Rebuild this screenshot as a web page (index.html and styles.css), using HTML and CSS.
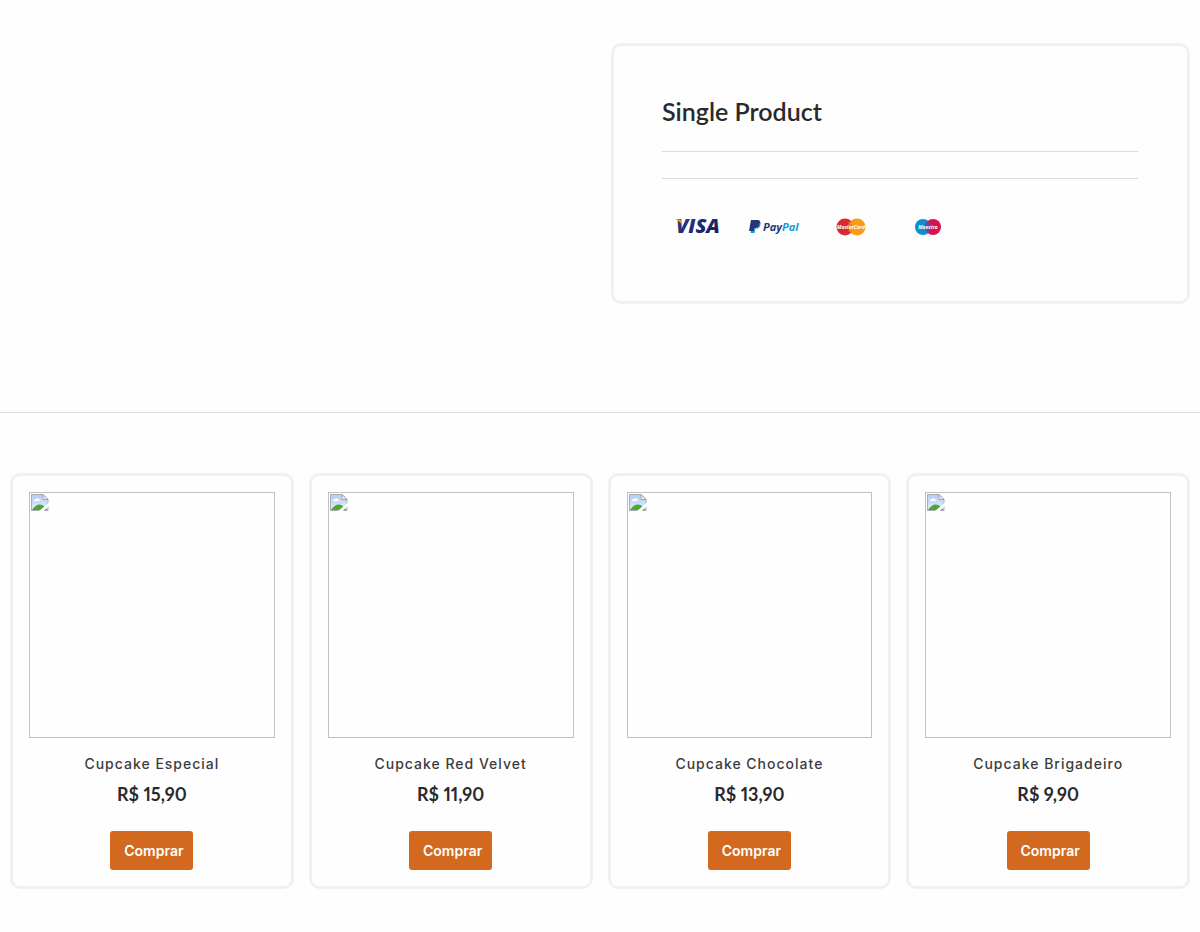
FILE: index.html
```html
<!DOCTYPE html>
<html lang="pt-BR">
<head>
<meta charset="utf-8">
<meta name="viewport" content="width=device-width, initial-scale=1">
<title>Single Product</title>
<link rel="stylesheet" href="styles.css">
</head>
<body>
<svg class="defs" aria-hidden="true">
  <defs>
    <linearGradient id="sky" x1="0" y1="0" x2="0" y2="1"><stop offset="0" stop-color="#b4cdf5"/><stop offset="1" stop-color="#e3edfc"/></linearGradient>
    <linearGradient id="visa" x1="0" y1="0" x2="1" y2="1"><stop offset="0" stop-color="#29419a"/><stop offset="1" stop-color="#13164f"/></linearGradient>
    <symbol id="missing" viewBox="0 0 18 18">
      <path d="M.5 .5H12L17 5.500V16.500H.5Z" fill="url(#sky)" stroke="#a9adb3"/>
      <path d="M3 6.500C3 5 4.500 5 5 5.500C5.500 3.500 8 4 8 5.500C9.500 5.500 9.500 7 8.500 7H3.500Z" fill="#fff"/>
      <path d="M1 16C3 12.500 6 10.500 9 10.500C12 10.500 14.500 13 16.500 16Z" fill="#4ea633"/>
      <path d="M12 .5V5.500H17Z" fill="#eef0f2" stroke="#a0a4aa"/>
      <path d="M7.500 17.500L18 8.500V12L12 17.500Z" fill="#fff"/>
    </symbol>
  </defs>
</svg>
<section class="detail">
  <article class="summary">
    <h1 class="summary-title">Single Product</h1>
    <hr class="rule">
    <hr class="rule rule-second">
    <div class="payments">
      <svg class="pay" viewBox="0 0 78 40" role="img" aria-label="Visa">
        <text class="visa" x="14" y="27" fill="url(#visa)">VISA</text>
        <path d="M12 13.500H18.500L20 19C18 15.500 16 14.500 12 13.500Z" fill="#f5a623"/>
      </svg>
      <svg class="pay" viewBox="0 0 78 40" role="img" aria-label="PayPal">
        <path d="M11 14H17C20 14 21 16 20 19C19 22 17 22 14.500 22L14 25H9Z" fill="#263577"/>
        <path d="M19.500 16.500C21 18 20.500 22 17 22.500H15.500L14.500 27H10.500L11 25H14L14.500 22C17 22 19 21.500 19.500 16.500Z" fill="#179bd7"/>
        <text class="paypal" x="23" y="25" fill="#263577">Pay<tspan fill="#179bd7">Pal</tspan></text>
      </svg>
      <svg class="pay" viewBox="0 0 78 40" role="img" aria-label="MasterCard">
        <circle cx="27" cy="21" r="8.500" fill="#d52b32"/><circle cx="39" cy="21" r="8.500" fill="#f99b16"/>
        <path d="M30 16.500H34M30 19H34M30 25H34" stroke="#ed6a28" stroke-width="1"/>
        <text class="brand" x="33" y="23">MasterCard</text>
      </svg>
      <svg class="pay" viewBox="0 0 78 40" role="img" aria-label="Maestro">
        <circle cx="27" cy="21" r="8" fill="#0c8fcf"/><circle cx="37" cy="21" r="8" fill="#d9124f"/>
        <path d="M32 14.800A8 8 0 0 1 32 27.200A8 8 0 0 1 32 14.800Z" fill="#70459a"/>
        <text class="brand" x="32" y="23">Maestro</text>
      </svg>
    </div>
  </article>
</section>
<section class="products">
  <article class="product">
    <div class="photo"><svg class="missing"><use href="#missing"/></svg></div>
    <h2 class="name">Cupcake Especial</h2>
    <p class="price">R$ 15,90</p>
    <button class="buy" type="button">Comprar</button>
  </article>
  <article class="product">
    <div class="photo"><svg class="missing"><use href="#missing"/></svg></div>
    <h2 class="name">Cupcake Red Velvet</h2>
    <p class="price">R$ 11,90</p>
    <button class="buy" type="button">Comprar</button>
  </article>
  <article class="product">
    <div class="photo"><svg class="missing"><use href="#missing"/></svg></div>
    <h2 class="name">Cupcake Chocolate</h2>
    <p class="price">R$ 13,90</p>
    <button class="buy" type="button">Comprar</button>
  </article>
  <article class="product">
    <div class="photo"><svg class="missing"><use href="#missing"/></svg></div>
    <h2 class="name">Cupcake Brigadeiro</h2>
    <p class="price">R$ 9,90</p>
    <button class="buy" type="button">Comprar</button>
  </article>
</section>
</body>
</html>
```
FILE: styles.css
```css
* { box-sizing: border-box; }
body { margin: 0; background: #fefefe; color: #2a2a2c; font-family: Inter, "Liberation Sans", sans-serif; }
.defs { position: absolute; width: 0; height: 0; }
.detail { display: grid; grid-template-columns: 1fr 1fr; column-gap: 22px; padding: 43px 10px 108px; border-bottom: 1px solid #dcdcdc; }
.summary { grid-column: 2; border: 3px solid #f1f1f1; border-radius: 10px; padding: 47px 49px 55px 48px; }
.summary-title { margin: 0; font: 600 25px/36px Lato, sans-serif; }
.rule { margin: 22px 0 0; border: 0; border-top: 1px solid #dcdcdc; }
.rule-second { margin-top: 26px; }
.payments { display: flex; flex-wrap: wrap; margin-top: 27px; }
.pay { width: 78px; height: 40px; }
.visa { font: italic 800 20px "Open Sans", sans-serif; }
.paypal { font: italic 700 11px "Open Sans", sans-serif; }
.brand { font: italic 700 5px "Open Sans", sans-serif; fill: #fff; text-anchor: middle; }
.products { display: grid; grid-template-columns: repeat(4, 1fr); gap: 15px; padding: 60px 10px 43px; }
.product { display: flex; flex-direction: column; align-items: center; border: 3px solid #f1f1f1; border-radius: 10px; padding: 16px; }
.photo { width: 100%; aspect-ratio: 1; border: 1px solid #c0c0c0; padding: 1px; }
.missing { display: block; width: 18px; height: 18px; }
.name { margin: 15px 0 0; color: #3c3c3e; font-size: 14px; line-height: 22px; font-weight: 500; letter-spacing: 1px; }
.price { margin: 6px 0 0; font: 700 18px/26px Lato, sans-serif; font-variant-numeric: proportional-nums; }
.buy { margin-top: 24px; height: 39px; padding: 2px 10px 0 14px; border: 0; border-radius: 3px; background: #d2691e; color: #fff; font: 600 14px/20px Inter, sans-serif; }
```
